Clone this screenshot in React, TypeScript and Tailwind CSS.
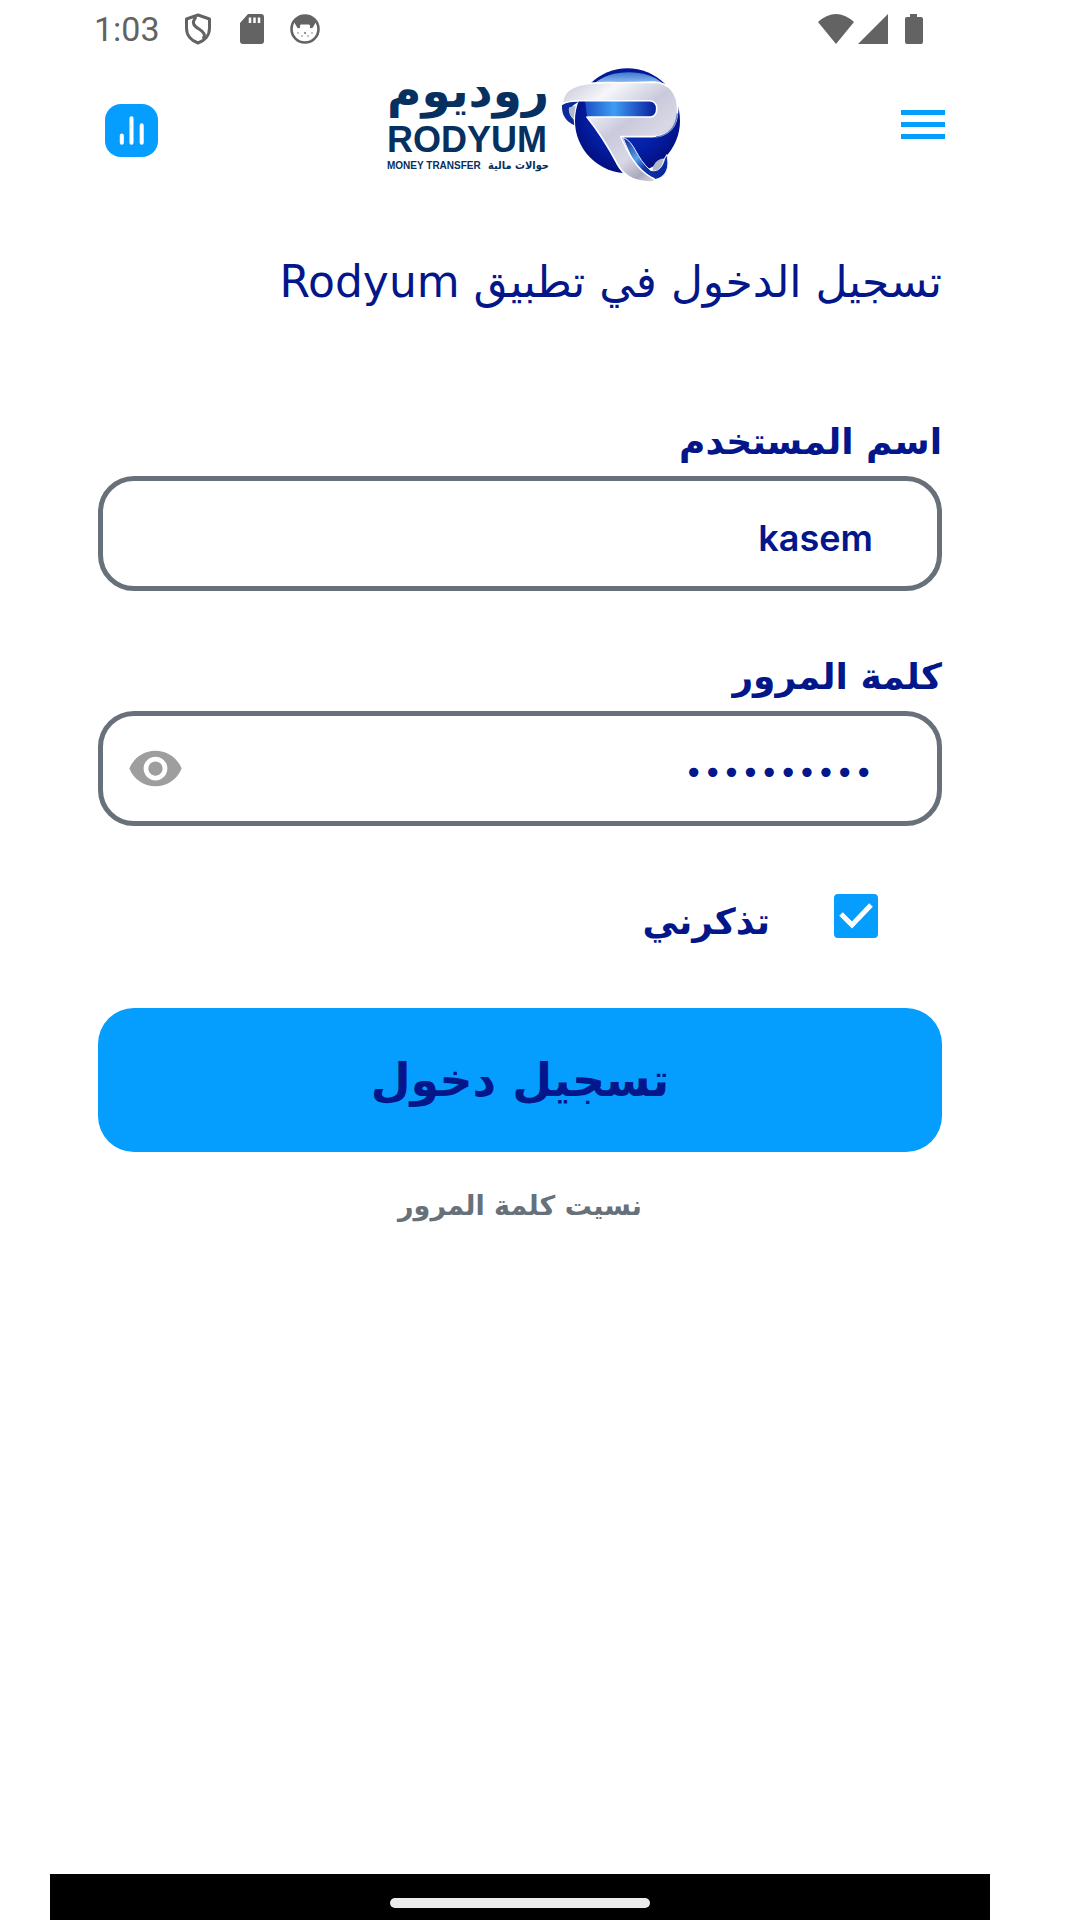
import { useState } from "react"
import { MdVisibility } from "react-icons/md"

const inputClass = "h-full min-w-0 flex-1 bg-transparent pt-2 text-right outline-none"

export default function App() {
  return (
    <div className="min-h-screen bg-white pr-[90px] pl-[50px] font-['DejaVu_Sans',sans-serif]">
      <div className="flex min-h-screen flex-col">
        <StatusBar />
        <Header />
        <LoginForm />
        <div className="mt-auto flex h-[46px] items-end justify-center bg-black pb-3">
          <div className="h-[10px] w-[260px] rounded-full bg-[#ebebeb]" />
        </div>
      </div>
    </div>
  )
}

function StatusBar() {
  return (
    <div className="flex h-[58px] items-center justify-between pr-[66px] pl-11 text-[#636363]">
      <div className="flex items-center">
        <span className="mr-6 font-['Roboto',sans-serif] text-[34px] leading-10">1:03</span>
        {/* shield */}
        <svg viewBox="0 0 28 32" className="mr-7 h-8 w-7" fill="none" stroke="currentColor" strokeWidth="3">
          <path d="M14 2 L25.500 6 V15 C25.500 23 20 28 14 30 C8 28 2.500 23 2.500 15 V6 Z" strokeLinejoin="round" />
          <path d="M12 4 C7 10 10 13 15 16 C20 19 22 22 19 26" />
        </svg>
        {/* sd card */}
        <svg viewBox="0 0 24 30" className="mr-[26px] h-[30px] w-6">
          <path
            d="M8 0 H21 Q24 0 24 3 V27 Q24 30 21 30 H3 Q0 30 0 27 V9 Z"
            fill="currentColor"
          />
          <path d="M10 3.500 V9 M14.500 3.500 V9 M19 3.500 V9" stroke="#fff" strokeWidth="2.500" />
        </svg>
        {/* cat face */}
        <svg viewBox="0 0 30 30" className="h-[30px] w-[30px]">
          <circle cx="15" cy="15" r="13.500" fill="#fff" stroke="currentColor" strokeWidth="2.600" />
          <path
            d="M4 8 C9 0 21 0 26 8 L22.500 14 L19 10.500 H11 L7.500 14 Z"
            fill="currentColor"
          />
          <g fill="currentColor">
            <circle cx="9" cy="13" r="1.200" />
            <circle cx="21" cy="13" r="1.200" />
            <circle cx="15" cy="19" r="0.900" />
            <circle cx="8" cy="19" r="0.700" />
            <circle cx="12" cy="22" r="0.700" />
            <circle cx="18" cy="22" r="0.700" />
            <circle cx="22" cy="19" r="0.700" />
          </g>
        </svg>
      </div>
      <div className="flex items-center">
        <svg viewBox="0 0 36 30" className="mr-1 h-[30px] w-9" fill="currentColor">
          <path d="M0 8 Q18 -8 36 8 L18 30 Z" />
        </svg>
        <svg viewBox="0 0 30 30" className="mr-4 h-[30px] w-[30px]" fill="currentColor">
          <path d="M30 0 V30 H0 Z" />
        </svg>
        <svg viewBox="0 0 20 32" className="h-8 w-5" fill="currentColor">
          <path d="M6 1 H13 V4 H17 Q19 4 19 6 V29 Q19 31 17 31 H3 Q1 31 1 29 V6 Q1 4 3 4 H6 Z" />
        </svg>
      </div>
    </div>
  )
}

function Header() {
  return (
    <header className="flex h-[138px] items-start justify-between pr-[45px] pl-[55px]">
      <button type="button" aria-label="Statistics" className="mt-[46px] h-[53px] w-[53px] rounded-2xl bg-[#059eff]">
        <svg viewBox="0 0 52 52" className="h-full w-full" stroke="#fff" strokeWidth="4" strokeLinecap="round">
          <path d="M16.500 31 V38 M26 14 V38 M36 21 V38" />
        </svg>
      </button>
      <div className="mt-2 ml-2.5 flex items-start gap-2.5">
        <div className="flex w-[162px] flex-col text-[#06305f]">
          <div dir="rtl" className="mb-1.5 text-[47px] leading-[50px] font-bold whitespace-nowrap">
            روديوم
          </div>
          <div className="font-['Liberation_Sans',sans-serif] text-[36px] leading-9 font-bold">RODYUM</div>
          <div className="flex items-center justify-between leading-4 font-bold whitespace-nowrap">
            <span className="font-['Liberation_Sans',sans-serif] text-[10px]">MONEY TRANSFER</span>
            <span dir="rtl" className="font-['DejaVu_Sans_Condensed','DejaVu_Sans',sans-serif] text-[11px]">
              حوالات مالية
            </span>
          </div>
        </div>
        <LogoMark />
      </div>
      <button type="button" aria-label="Menu" className="mt-[52px]">
        <svg viewBox="0 0 44 30" className="h-[30px] w-11" fill="#059eff">
          <path d="M0 0 H44 V5 H0 Z M0 12 H44 V17 H0 Z M0 24 H44 V29 H0 Z" />
        </svg>
      </button>
    </header>
  )
}

function LogoMark() {
  return (
    <svg viewBox="570 34 370 360" className="h-[120px] w-[123px]" role="img" aria-label="Rodyum">
      <defs>
        <radialGradient id="sphere" cx="0.500" cy="0.450" r="0.550">
          <stop offset="0" stopColor="#0a2fc0" />
          <stop offset="0.600" stopColor="#0420a8" />
          <stop offset="1" stopColor="#020f80" />
        </radialGradient>
        <linearGradient id="shine" x1="0" y1="0" x2="0" y2="1">
          <stop offset="0" stopColor="#3f78cc" />
          <stop offset="1" stopColor="#8fc0f4" />
        </linearGradient>
        <linearGradient id="ribbon" x1="0" y1="0" x2="0.900" y2="1">
          <stop offset="0" stopColor="#c6c6d6" />
          <stop offset="0.250" stopColor="#f6f6fb" />
          <stop offset="0.500" stopColor="#c9c9dc" />
          <stop offset="0.700" stopColor="#d9d9e6" />
          <stop offset="0.850" stopColor="#a9a9bd" />
          <stop offset="1" stopColor="#f2f2f7" />
        </linearGradient>
        <linearGradient id="counter" x1="0" x2="1">
          <stop offset="0" stopColor="#1c50c4" />
          <stop offset="0.400" stopColor="#3f9cf4" />
          <stop offset="1" stopColor="#06189a" />
        </linearGradient>
        <linearGradient id="fold" x1="0" y1="0" x2="1" y2="1">
          <stop offset="0" stopColor="#0a1c8c" />
          <stop offset="0.400" stopColor="#5aa4ea" />
          <stop offset="0.600" stopColor="#0a34b0" />
          <stop offset="1" stopColor="#06208f" />
        </linearGradient>
      </defs>
      <circle cx="776" cy="198" r="158" fill="url(#sphere)" />
      <path d="M676 86 C722 42 835 40 880 84 C820 80 740 78 676 86 Z" fill="url(#shine)" />
      {/* tail wrapping behind the sphere */}
      <path
        d="M579 150 C577 182 592 200 616 212 L614 194 C602 184 600 168 612 152 L630 140 H590 Z"
        fill="#0b2a9c"
      />
      <path d="M600 158 C598 176 604 184 614 192 L620 152 Z" fill="#b4b8cc" />
      <path d="M648 138 H845 Q866 142 866 162 Q866 185 845 187 H655 Z" fill="url(#counter)" />
      {/* lower fold */}
      <path
        d="M762 248 C800 262 800 310 846 348 C872 352 880 338 888 312 L894 300 C906 346 886 374 850 376 L800 340 Z"
        fill="url(#fold)"
        stroke="#e8edf8"
        strokeWidth="3"
      />
      <path d="M852 340 C858 322 868 314 884 312 C880 338 872 350 852 348 Z" fill="#b4b8cc" />
      <path
        fillRule="evenodd"
        d="M580 148 C580 112 606 92 660 86 C720 82 780 82 856 82 C903 84 927 118 927 162 C927 214 902 246 848 246 H756 C774 286 798 342 850 370 C868 378 856 384 834 382 C788 378 764 362 744 326 C720 280 690 232 654 187 H846 Q864 184 864 162 Q864 139 842 138 H636 C610 138 590 142 580 148 Z"
        fill="url(#ribbon)"
        stroke="#fff"
        strokeWidth="5"
        strokeLinejoin="round"
      />
      <path d="M862 247 C902 242 922 214 926 176" fill="none" stroke="#5d78c4" strokeWidth="4" />
    </svg>
  )
}

function LoginForm() {
  const [userName, setUserName] = useState("kasem")
  const [password, setPassword] = useState("kasem12345")
  const [showPassword, setShowPassword] = useState(false)
  const [remember, setRemember] = useState(true)

  return (
    <form dir="rtl" className="flex flex-col px-12 pt-14 text-[#03168a]" onSubmit={(e) => e.preventDefault()}>
      <h1 className="text-[44px] leading-[60px] whitespace-nowrap">تسجيل الدخول في تطبيق Rodyum</h1>

      <label htmlFor="username" className="mt-[100px] mb-1 text-[36px] leading-[60px] font-bold">
        اسم المستخدم
      </label>
      <div className="flex h-[115px] rounded-[36px] border-5 border-[#687079] pr-16 pl-6">
        <input
          id="username"
          dir="ltr"
          value={userName}
          onChange={(e) => setUserName(e.target.value)}
          className={`${inputClass} font-['Inter',sans-serif] text-[36px] font-semibold`}
        />
      </div>

      <label htmlFor="password" className="mt-14 mb-1 text-[36px] leading-[60px] font-bold">
        كلمة المرور
      </label>
      <div className="flex h-[115px] items-center rounded-[36px] border-5 border-[#687079] pr-16 pl-6">
        <input
          id="password"
          dir="ltr"
          type={showPassword ? "text" : "password"}
          value={password}
          onChange={(e) => setPassword(e.target.value)}
          className={`${inputClass} text-[32px]`}
        />
        <button
          type="button"
          aria-label="إظهار كلمة المرور"
          onClick={() => setShowPassword(!showPassword)}
          className="text-[#9e9e9e]"
        >
          <MdVisibility size={57} />
        </button>
      </div>

      <div className="mt-[58px] flex h-16 items-center gap-16 pr-16">
        <span className="grid h-11 w-11">
          <input
            id="remember"
            type="checkbox"
            checked={remember}
            onChange={(e) => setRemember(e.target.checked)}
            className="peer col-start-1 row-start-1 h-11 w-11 appearance-none rounded border-4 border-[#059eff] checked:bg-[#059eff]"
          />
          <svg
            viewBox="0 0 44 44"
            className="pointer-events-none invisible col-start-1 row-start-1 peer-checked:visible"
            fill="none"
            stroke="#fff"
            strokeWidth="5"
          >
            <path d="M7 20 L18 31 L37 11" />
          </svg>
        </span>
        <label htmlFor="remember" className="pt-3 text-[36px] leading-[60px] font-bold">
          تذكرني
        </label>
      </div>

      <button type="submit" className="mt-[60px] h-36 rounded-[36px] bg-[#059eff] text-[46px] font-bold">
        تسجيل دخول
      </button>
      <a href="#forgot" className="mt-6 self-center text-[27px] leading-[60px] font-bold text-[#687079]">
        نسيت كلمة المرور
      </a>
    </form>
  )
}
